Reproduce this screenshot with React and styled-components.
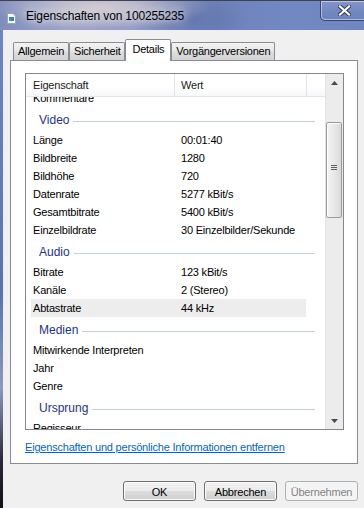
import React from 'react';
import styled, { createGlobalStyle } from 'styled-components';

const Global = createGlobalStyle`
  html, body { margin: 0; padding: 0; background: #f0f0f0; }
  body { font-family: "Liberation Sans", Arial, sans-serif; }
`;

const Window = styled.div`
  width: 364px;
  height: 508px;
  display: flex;
  flex-direction: column;
  overflow: hidden;
  font-family: "Liberation Sans", Arial, sans-serif;
  font-size: 11px;
  letter-spacing: -0.2px;
  color: #000;
`;

const TitleBar = styled.div`
  height: 30px;
  flex: none;
  box-sizing: border-box;
  display: flex;
  align-items: center;
  padding-left: 7px;
  border-top: 1px solid #3d4158;
  background:
    radial-gradient(ellipse 110px 22px at 100px 6px, rgba(228, 216, 214, 0.75), rgba(228, 216, 214, 0) 100%),
    radial-gradient(ellipse 60px 30px at 190px 18px, rgba(80, 100, 160, 0.55), rgba(80, 100, 160, 0) 100%),
    linear-gradient(90deg, #7f8dbd 0%, #9ea6c8 18%, #939cc4 40%, #7084bb 60%, #7288c1 80%, #6f86c0 100%);
`;

const TitleIcon = styled.svg`
  flex: none;
  margin-top: 5px;
  margin-right: 10px;
`;

const TitleText = styled.div`
  font-size: 12px;
  letter-spacing: -0.15px;
  color: #000;
  text-shadow: 0 0 8px rgba(255, 255, 255, 0.9), 0 0 14px rgba(255, 255, 255, 0.6);
  margin-top: 1px;
`;

const CloseButton = styled.div`
  flex: none;
  align-self: flex-start;
  margin-left: auto;
  margin-right: -4px;
  width: 48px;
  height: 20px;
  box-sizing: border-box;
  border: 1px solid #3c4566;
  border-top: none;
  border-radius: 0 0 0 5px;
  box-shadow: inset 0 0 0 1px rgba(230, 236, 250, 0.55);
  background: linear-gradient(#8496c9, #7087c0 60%, #6c84bf);
  display: flex;
  align-items: center;
  justify-content: center;
`;

const Body = styled.div`
  flex: 1;
  display: flex;
  min-height: 0;
`;

const LeftFrame = styled.div`
  width: 3px;
  flex: none;
  background: linear-gradient(#7084bd 0%, #5d72ab 55%, #8c98bf 75%, #2a2a38 90%, #101016 100%);
`;

const Client = styled.div`
  flex: 1;
  display: flex;
  flex-direction: column;
  background: #f0f0f0;
  padding: 9px 7px 0 7px;
`;

const TabStrip = styled.div`
  position: relative;
  z-index: 2;
  display: flex;
  align-items: flex-end;
  height: 22px;
  padding-left: 3px;
  margin-bottom: -1px;
`;

const Tab = styled.div`
  box-sizing: border-box;
  height: ${(p) => (p.$active ? '22px' : '18px')};
  margin-bottom: ${(p) => (p.$active ? '0' : '1px')};
  padding: ${(p) => (p.$active ? '2px 6px 0 6px' : '2px 4px 0 4px')};
  border: 1px solid #898c95;
  border-bottom: none;
  border-radius: 2px 2px 0 0;
  background: ${(p) =>
    p.$active ? '#ffffff' : 'linear-gradient(#f3f3f3 0%, #e8e8e8 45%, #dcdcdc 55%, #d3d3d3 100%)'};
  line-height: ${(p) => (p.$active ? '15px' : '13px')};
  letter-spacing: -0.25px;
  white-space: nowrap;
`;

const Panel = styled.div`
  flex: none;
  height: 404px;
  box-sizing: border-box;
  border: 1px solid #898c95;
  background: #ffffff;
  padding: 12px 13px 0 14px;
  display: flex;
  flex-direction: column;
`;

const ListView = styled.div`
  width: 319px;
  height: 357px;
  box-sizing: border-box;
  border: 1px solid #828790;
  display: flex;
`;

const ListMain = styled.div`
  flex: 1;
  min-width: 0;
  display: flex;
  flex-direction: column;
  overflow: hidden;
`;

const Header = styled.div`
  height: 23px;
  flex: none;
  box-sizing: border-box;
  display: flex;
  border-bottom: 1px solid #e3e5e8;
  background: linear-gradient(#ffffff 0%, #ffffff 55%, #f6f7f9 100%);
`;

const HeaderCell = styled.div`
  box-sizing: border-box;
  width: ${(p) => (p.$width ? `${p.$width}px` : 'auto')};
  flex: ${(p) => (p.$width ? 'none' : '1')};
  padding-left: ${(p) => p.$pad}px;
  border-right: ${(p) => (p.$width ? '1px solid #e2e3e6' : 'none')};
  display: flex;
  align-items: center;
  color: #1a1a1a;
  padding-bottom: 1px;
`;

const ListBody = styled.div`
  flex: 1;
  overflow: hidden;
`;

const Scrolled = styled.div`
  margin-top: -8px;
`;

const Row = styled.div`
  height: 18px;
  width: 275px;
  margin-left: 5px;
  padding-left: 2px;
  box-sizing: border-box;
  display: grid;
  grid-template-columns: 148px 1fr;
  align-items: center;
  background: ${(p) => (p.$selected ? '#ededed' : 'transparent')};
  white-space: nowrap;
`;

const Group = styled.div`
  height: 24px;
  box-sizing: border-box;
  display: flex;
  align-items: center;
  gap: 4px;
  padding: 2px 10px 0 13px;
`;

const GroupLabel = styled.span`
  font-size: 12px;
  letter-spacing: 0;
  color: #1e3287;
`;

const GroupLine = styled.div`
  flex: 1;
  height: 1px;
  margin-top: 2px;
  background: #c3cde0;
`;

const ScrollBar = styled.div`
  width: 18px;
  flex: none;
  display: flex;
  flex-direction: column;
  background: #ececec;
  border-left: 1px solid #e4e4e4;
  box-sizing: border-box;
`;

const ScrollArrow = styled.div`
  height: 17px;
  flex: none;
  display: flex;
  align-items: center;
  justify-content: center;
`;

const ScrollTrack = styled.div`
  flex: 1;
  display: flex;
  flex-direction: column;
`;

const Thumb = styled.div`
  margin: 31px 0 0 0;
  width: 16px;
  height: 96px;
  box-sizing: border-box;
  border: 1px solid #9a9a9a;
  border-radius: 2px;
  background: linear-gradient(90deg, #f4f4f4 0%, #e9e9e9 50%, #d9d9d9 100%);
  box-shadow: inset 1px 1px 0 #ffffff;
  display: flex;
  align-items: center;
  justify-content: center;
`;

const Grip = styled.div`
  width: 6px;
  height: 5px;
  margin-top: -6px;
  background: repeating-linear-gradient(#5f5f5f 0 1px, transparent 1px 2px);
`;

const Link = styled.a`
  margin-top: 10px;
  line-height: 14px;
  color: #0066cc;
  text-decoration: underline;
  cursor: pointer;
  align-self: flex-start;
`;

const ButtonRow = styled.div`
  display: flex;
  justify-content: flex-end;
  gap: 8px;
  margin-top: 17px;
`;

const Button = styled.div`
  width: 73px;
  height: 20px;
  box-sizing: border-box;
  border: 1px solid ${(p) => (p.$disabled ? '#adb2b5' : '#707070')};
  border-radius: 3px;
  background: ${(p) =>
    p.$disabled ? '#f4f4f4' : 'linear-gradient(#f2f2f2 0%, #ebebeb 48%, #dddddd 52%, #cfcfcf 100%)'};
  box-shadow: ${(p) => (p.$disabled ? 'none' : 'inset 0 0 0 1px #fbfbfb')};
  color: ${(p) => (p.$disabled ? '#838383' : '#000')};
  display: flex;
  align-items: center;
  justify-content: center;
  padding-top: 1px;
`;

const items = [
  { name: 'Kommentare' },
  { group: 'Video' },
  { name: 'Länge', value: '00:01:40' },
  { name: 'Bildbreite', value: '1280' },
  { name: 'Bildhöhe', value: '720' },
  { name: 'Datenrate', value: '5277 kBit/s' },
  { name: 'Gesamtbitrate', value: '5400 kBit/s' },
  { name: 'Einzelbildrate', value: '30 Einzelbilder/Sekunde' },
  { group: 'Audio' },
  { name: 'Bitrate', value: '123 kBit/s' },
  { name: 'Kanäle', value: '2 (Stereo)' },
  { name: 'Abtastrate', value: '44 kHz', selected: true },
  { group: 'Medien' },
  { name: 'Mitwirkende Interpreten' },
  { name: 'Jahr' },
  { name: 'Genre' },
  { group: 'Ursprung' },
  { name: 'Regisseur' },
];

const tabs = ['Allgemein', 'Sicherheit', 'Details', 'Vorgängerversionen'];

function Arrow({ down }) {
  return (
    <svg width="7" height="4" viewBox="0 0 7 4">
      <polygon points={down ? '0,0 7,0 3.5,4' : '0,4 7,4 3.5,0'} fill="#4a4a4a" />
    </svg>
  );
}

export default function App() {
  return (
    <>
      <Global />
      <Window>
        <TitleBar>
          <TitleIcon width="9" height="11" viewBox="0 0 9 11">
            <path d="M0.5 0.5 H6 L8.5 3 V10.5 H0.5 Z" fill="#f8f8f8" stroke="#9aa4b8" />
            <rect x="2" y="4" width="5" height="4" fill="#3d7fd6" />
            <rect x="2" y="6" width="2" height="2" fill="#5aa84a" />
          </TitleIcon>
          <TitleText>Eigenschaften von 100255235</TitleText>
          <CloseButton>
            <svg width="13" height="11" viewBox="0 0 13 11">
              <path d="M2 1.5 L11 9.5 M11 1.5 L2 9.5" stroke="#2e3550" strokeWidth="4" strokeLinecap="square" />
              <path d="M2 1.5 L11 9.5 M11 1.5 L2 9.5" stroke="#ffffff" strokeWidth="2.2" strokeLinecap="square" />
            </svg>
          </CloseButton>
        </TitleBar>
        <Body>
          <LeftFrame />
          <Client>
            <TabStrip>
              {tabs.map((t) => (
                <Tab key={t} $active={t === 'Details'}>
                  {t}
                </Tab>
              ))}
            </TabStrip>
            <Panel>
              <ListView>
                <ListMain>
                  <Header>
                    <HeaderCell $width={149} $pad={7}>Eigenschaft</HeaderCell>
                    <HeaderCell $width={132} $pad={6}>Wert</HeaderCell>
                    <HeaderCell $pad={0} />
                  </Header>
                  <ListBody>
                    <Scrolled>
                      {items.map((it, i) =>
                        it.group ? (
                          <Group key={i}>
                            <GroupLabel>{it.group}</GroupLabel>
                            <GroupLine />
                          </Group>
                        ) : (
                          <Row key={i} $selected={it.selected}>
                            <span>{it.name}</span>
                            <span>{it.value || ''}</span>
                          </Row>
                        )
                      )}
                    </Scrolled>
                  </ListBody>
                </ListMain>
                <ScrollBar>
                  <ScrollArrow>
                    <Arrow />
                  </ScrollArrow>
                  <ScrollTrack>
                    <Thumb>
                      <Grip />
                    </Thumb>
                  </ScrollTrack>
                  <ScrollArrow>
                    <Arrow down />
                  </ScrollArrow>
                </ScrollBar>
              </ListView>
              <Link>Eigenschaften und persönliche Informationen entfernen</Link>
            </Panel>
            <ButtonRow>
              <Button>OK</Button>
              <Button>Abbrechen</Button>
              <Button $disabled>Übernehmen</Button>
            </ButtonRow>
          </Client>
        </Body>
      </Window>
    </>
  );
}
